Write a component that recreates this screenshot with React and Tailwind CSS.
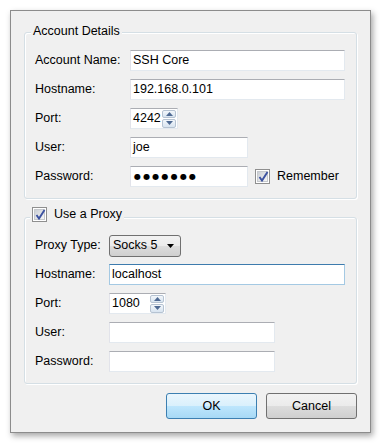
import React from 'react';

const font = { fontFamily: '"Liberation Sans", Arial, sans-serif' };

function TextBox({ value, width, focused, children }) {
  return (
    <div
      className={`h-[21px] ${width} flex items-center bg-white border pl-[2px] text-black ${
        focused
          ? 'border-[#a4c9e3] border-t-[#3d7bad]'
          : 'border-[#e3e9ef] border-t-[#abadb3] border-l-[#e2e3ea]'
      }`}
    >
      {value}
      {children}
    </div>
  );
}

function Spin({ value, width }) {
  return (
    <div className={`h-[21px] ${width} flex items-center bg-white border border-[#e3e9ef] border-t-[#abadb3] border-l-[#e2e3ea] pl-[2px] pr-[1px]`}>
      <span className="flex-1">{value}</span>
      <div className="flex flex-col gap-[1px] w-[14px] h-[18px]">
        {['up', 'down'].map(d => (
          <div key={d} className="flex-1 flex items-center justify-center border border-[#b6c3d2] rounded-[2px] bg-gradient-to-b from-[#f3f7fb] to-[#d8e4f0]">
            <svg width="7" height="4" viewBox="0 0 7 4">
              {d === 'up'
                ? <path d="M0 4 L3.5 0 L7 4 Z" fill="#4f6a93" />
                : <path d="M0 0 L3.5 4 L7 0 Z" fill="#4f6a93" />}
            </svg>
          </div>
        ))}
      </div>
    </div>
  );
}

function Check() {
  return (
    <div className="w-[15px] h-[15px] border border-[#8f8f8f] bg-white p-[1px] shrink-0">
      <div className="w-full h-full border border-[#c6c9cd] bg-gradient-to-br from-[#cbcfd5] to-[#f6f6f6] relative">
        <svg className="absolute -left-[1px] -top-[2px]" width="13" height="13" viewBox="0 0 13 13">
          <path d="M2.5 7 L5 10.5 L10.5 2" fill="none" stroke="#3c52a0" strokeWidth="1.9" />
        </svg>
      </div>
    </div>
  );
}

function Row({ label, labelW, children }) {
  return (
    <div className="flex items-center h-[21px]">
      <span className={`${labelW} shrink-0`}>{label}</span>
      {children}
    </div>
  );
}

function Button({ children, primary }) {
  return (
    <div
      className={`w-[91px] h-[26px] flex items-center justify-center rounded-[3px] border ${
        primary
          ? 'border-[#3c7fb1] bg-[linear-gradient(#eaf6fd_0%,#d9f0fc_50%,#bee6fd_50%,#a7d9f5_100%)]'
          : 'border-[#707070] bg-[linear-gradient(#f2f2f2_0%,#ebebeb_50%,#dddddd_50%,#cfcfcf_100%)]'
      }`}
    >
      {children}
    </div>
  );
}

export default function App() {
  return (
    <div className="min-h-screen bg-white pt-[10px] pl-[10px] text-[12.5px] leading-[15px] text-black" style={font}>
      <div className="w-[361px] h-[423px] bg-[#f0f0f0] border border-[#8c8c8c] shadow-[2px_3px_6px_rgba(0,0,0,0.35)] flex flex-col pl-[13px] pt-[21px]">
        <div className="relative w-[333px] h-[167px] border border-[#d5dfe5] rounded-[3px] shadow-[inset_1px_1px_0_#fff,1px_1px_0_#fff] pt-[17px] pl-[10px] flex flex-col gap-[8px]">
          <span className="absolute left-[6px] -top-[9px] px-[2px] bg-[#f0f0f0]">Account Details</span>
          <Row label="Account Name:" labelW="w-[95px]">
            <TextBox value="SSH Core" width="w-[215px]" />
          </Row>
          <Row label="Hostname:" labelW="w-[95px]">
            <TextBox value="192.168.0.101" width="w-[215px]" />
          </Row>
          <Row label="Port:" labelW="w-[95px]">
            <Spin value="4242" width="w-[48px]" />
          </Row>
          <Row label="User:" labelW="w-[95px]">
            <TextBox value="joe" width="w-[118px]" />
          </Row>
          <Row label="Password:" labelW="w-[95px]">
            <TextBox width="w-[118px]">
              <span className="pl-[1px] text-[8px] tracking-[2.2px]" style={{ fontFamily: '"DejaVu Sans", sans-serif' }}>●●●●●●●</span>
            </TextBox>
            <div className="ml-[7px] flex items-center gap-[7px]">
              <Check />
              <span>Remember</span>
            </div>
          </Row>
        </div>

        <div className="relative mt-[18px] w-[333px] h-[167px] border border-[#d5dfe5] rounded-[3px] shadow-[inset_1px_1px_0_#fff,1px_1px_0_#fff] pt-[17px] pl-[10px] flex flex-col gap-[8px]">
          <div className="absolute left-[5px] -top-[11px] px-[2px] bg-[#f0f0f0] flex items-center gap-[7px] h-[15px]">
            <Check />
            <span>Use a Proxy</span>
          </div>
          <Row label="Proxy Type:" labelW="w-[74px]">
            <div className="w-[72px] h-[22px] flex items-center justify-between pl-[3px] pr-[6px] rounded-[3px] border border-[#707070] bg-[linear-gradient(#f2f2f2_0%,#ebebeb_50%,#dddddd_50%,#cfcfcf_100%)]">
              <span>Socks 5</span>
              <svg width="7" height="4" viewBox="0 0 7 4">
                <path d="M0 0 L7 0 L3.5 4 Z" fill="#000" />
              </svg>
            </div>
          </Row>
          <Row label="Hostname:" labelW="w-[74px]">
            <TextBox value="localhost" width="w-[236px]" focused />
          </Row>
          <Row label="Port:" labelW="w-[74px]">
            <Spin value="1080" width="w-[57px]" />
          </Row>
          <Row label="User:" labelW="w-[74px]">
            <TextBox width="w-[166px]" />
          </Row>
          <Row label="Password:" labelW="w-[74px]">
            <TextBox width="w-[166px]" />
          </Row>
        </div>

        <div className="mt-[9px] w-[333px] flex justify-end gap-[9px]">
          <Button primary>OK</Button>
          <Button>Cancel</Button>
        </div>
      </div>
    </div>
  );
}
